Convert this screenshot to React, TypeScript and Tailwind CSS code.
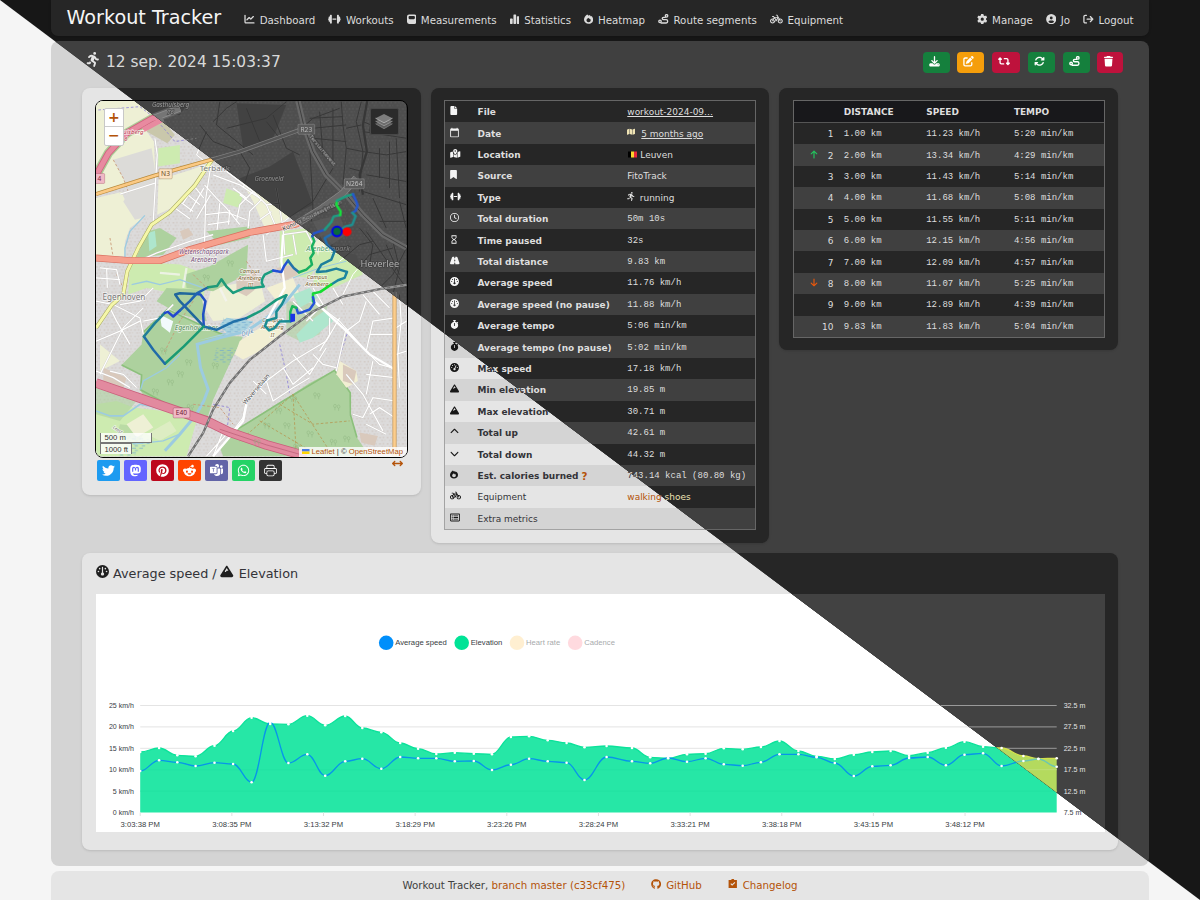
import React from "react";
import {
  FaArrowDown,
  FaArrowRightFromBracket,
  FaArrowUp,
  FaArrowsLeftRight,
  FaArrowsRotate,
  FaBicycle,
  FaBookmark,
  FaChartLine,
  FaChevronDown,
  FaChevronUp,
  FaCircleUser,
  FaDownload,
  FaDumbbell,
  FaFile,
  FaGauge,
  FaGaugeHigh,
  FaGear,
  FaGithub,
  FaMap,
  FaMapLocationDot,
  FaMastodon,
  FaMountain,
  FaPenToSquare,
  FaPersonRunning,
  FaPinterest,
  FaRedditAlien,
  FaRegClock,
  FaRegRectangleList,
  FaRetweet,
  FaRoad,
  FaStopwatch,
  FaTrash,
  FaTwitter,
  FaWhatsapp,
} from "react-icons/fa6";
import { MdCalendarToday, MdHourglassEmpty } from "react-icons/md";
import { BsMicrosoftTeams, BsPrinter } from "react-icons/bs";

type IconProps = { className?: string };
type IconType = React.ComponentType<IconProps>;
type ThemeProps = { dark: boolean };

/* ---------- custom icons ---------- */

const ScaleIcon = ({ className }: IconProps) => (
  <svg viewBox="0 0 16 16" className={className} fill="currentColor">
    <path
      fillRule="evenodd"
      d="M3.5 0h9A3.5 3.5 0 0 1 16 3.500v9a3.500 3.500 0 0 1-3.500 3.500h-9A3.500 3.500 0 0 1 0 12.500v-9A3.500 3.500 0 0 1 3.500 0zM4.500 2.800A1.800 1.800 0 0 0 2.700 4.600v1.600A1.800 1.800 0 0 0 4.500 8h7a1.800 1.800 0 0 0 1.800-1.800V4.600a1.800 1.800 0 0 0-1.800-1.800z"
    />
  </svg>
);

const BarsIcon = ({ className }: IconProps) => (
  <svg viewBox="0 0 16 16" className={className} fill="currentColor">
    <rect x="0" y="7" width="4.500" height="9" rx="1" />
    <rect x="5.800" y="0" width="4.500" height="16" rx="1" />
    <rect x="11.500" y="3" width="4.500" height="13" rx="1" />
  </svg>
);

const FlameIcon = ({ className }: IconProps) => (
  <svg viewBox="0 0 16 16" className={className} fill="currentColor">
    <path
      fillRule="evenodd"
      d="M5.500 0c1 .4 2 1.300 2.600 2.300L9.800.9c1 .8 1.700 1.700 2.200 2.600l1-.8C14.800 4.400 16 6.700 16 9c0 4-3.500 7-8 7s-8-3-8-7C0 5.500 2.500 2 5.500 0zM8 5.400C6.500 6.500 4.300 7.800 4.300 10c0 2 1.600 3.400 3.700 3.400s3.700-1.400 3.700-3.400c0-1.400-.8-2.600-1.600-3.300L9 7.800z"
    />
  </svg>
);

const RouteIcon = ({ className }: IconProps) => (
  <svg viewBox="0 0 16 16" className={className} fill="none" stroke="currentColor" strokeWidth="2.100">
    <circle cx="13" cy="2.900" r="1.900" />
    <circle cx="2.800" cy="11.500" r="1.900" />
    <path d="M11 5.200H8.200c-2.600 0-2.600 3.600 0 3.600h4.300c3 0 3 5.300 0 5.300H4.500" strokeLinecap="round" />
  </svg>
);

const CheckSquareIcon = ({ className }: IconProps) => (
  <svg viewBox="0 0 16 16" className={className} fill="currentColor">
    <path
      fillRule="evenodd"
      d="M5.500 1.500a2.600 2.600 0 0 1 5 0H15V16H1V1.500zM4 8.400l3 3 5.300-5.200-1.300-1.300-4 4-1.700-1.700z"
    />
  </svg>
);

const LayersIcon = ({ className }: IconProps) => (
  <svg viewBox="0 0 26 26" className={className}>
    <path d="M13 10 26 16.500 13 24 0 16.500z" fill="#5e5e5e" />
    <path d="M0 16.500 13 24l13-7.500" fill="none" stroke="#8a8a8a" />
    <path d="M13 6 26 12.500 13 19.500 0 12.500z" fill="#6d6d6d" />
    <path d="M0 12.500 13 19.500l13-7" fill="none" stroke="#a8a8a8" />
    <path d="M13 1.500 26 8 13 15 0 8z" fill="#7d7d7d" />
    <path d="M0 8l13 7 13-7" fill="none" stroke="#c4c4c4" />
  </svg>
);

/* ---------- header ---------- */

type NavEntry = { icon: IconType; label: string; size: string };

const mainNav: NavEntry[] = [
  { icon: FaChartLine, label: "Dashboard", size: "w-[11px] mr-[5px]" },
  { icon: FaDumbbell, label: "Workouts", size: "w-[12.800px] mr-[4.800px]" },
  { icon: ScaleIcon, label: "Measurements", size: "w-[9.500px] h-[9px] mr-[4.600px]" },
  { icon: BarsIcon, label: "Statistics", size: "w-[9.500px] h-[9.200px] mr-[5px]" },
  { icon: FlameIcon, label: "Heatmap", size: "w-[9.200px] h-[9.700px] mr-[4.700px]" },
  { icon: RouteIcon, label: "Route segments", size: "w-[10.700px] mr-[4.600px]" },
  { icon: FaBicycle, label: "Equipment", size: "w-[12.800px] mr-[4.800px]" },
];

const userNav: NavEntry[] = [
  { icon: FaGear, label: "Manage", size: "w-[10.500px] mr-[4.700px]" },
  { icon: FaCircleUser, label: "Jo", size: "w-[10.500px] mr-[4.700px]" },
  { icon: FaArrowRightFromBracket, label: "Logout", size: "w-[10.800px] mr-[4.700px]" },
];

function NavItem({ entry }: { entry: NavEntry }) {
  const Icon = entry.icon;
  return (
    <a className="flex items-baseline whitespace-nowrap">
      <Icon className={"shrink-0 h-[10.250px] " + entry.size} />
      <span>{entry.label}</span>
    </a>
  );
}

function Header({ dark }: ThemeProps) {
  return (
    <header
      className={
        "flex h-9 shrink-0 items-baseline rounded-b-[7px] pl-[15.500px] pr-[15.500px] pt-[4px] text-[10.250px] leading-[14px] shadow-sm " +
        (dark ? "bg-[#262626] text-[#dcdcdc]" : "bg-[#e5e5e5] text-[#404040]")
      }
    >
      <h1 className={"mr-[22.500px] whitespace-nowrap text-[19.200px] leading-[28px] " + (dark ? "text-[#f5f5f5]" : "text-[#262626]")}>
        Workout Tracker
      </h1>
      <nav className="flex gap-[13.100px]">
        {mainNav.map((entry) => (
          <NavItem key={entry.label} entry={entry} />
        ))}
      </nav>
      <nav className="ml-auto flex gap-[12.800px]">
        {userNav.map((entry) => (
          <NavItem key={entry.label} entry={entry} />
        ))}
      </nav>
    </header>
  );
}

/* ---------- title bar ---------- */

const actions: { icon: IconType; color: string }[] = [
  { icon: FaDownload, color: "w-[27px] bg-[#15803d]" },
  { icon: FaPenToSquare, color: "w-[27px] bg-[#f59e0b]" },
  { icon: FaRetweet, color: "w-[28.500px] bg-[#be123c]" },
  { icon: FaArrowsRotate, color: "w-[27px] bg-[#15803d]" },
  { icon: RouteIcon, color: "w-[27px] bg-[#15803d]" },
  { icon: FaTrash, color: "w-[26px] bg-[#be123c]" },
];

function TitleBar({ dark }: ThemeProps) {
  return (
    <div className="flex h-[47.500px] shrink-0 items-start pl-[35px] pr-[25.800px] pt-[11.500px]">
      <FaPersonRunning className={"mr-[5.500px] h-[15px] w-[14.500px] " + (dark ? "text-[#e5e5e5]" : "text-[#262626]")} />
      <h2 className={"text-[15.400px] leading-[20px] " + (dark ? "text-[#d9d9d9]" : "text-[#404040]")}>12 sep. 2024 15:03:37</h2>
      <div className="ml-auto flex gap-[7.600px]">
        {actions.map(({ icon: Icon, color }, i) => (
          <button key={i} className={"flex h-[20.700px] items-start rounded-[4px] pl-[6px] pt-[4.400px] text-white " + color}>
            <Icon className={"h-[10.500px] " + (i === 2 ? "w-[12px]" : "w-[11px]")} />
          </button>
        ))}
      </div>
    </div>
  );
}

/* ---------- map ---------- */

function Shield({ x, y, w, text, fill, ink }: { x: number; y: number; w: number; text: string; fill: string; ink: string }) {
  return (
    <g>
      <rect x={x - w / 2} y={y - 15} width={w} height={30} rx={3} fill={fill} stroke={ink} strokeOpacity={0.4} strokeWidth={2} />
      <text x={x} y={y + 7} textAnchor="middle" fontSize={20} fill={ink}>
        {text}
      </text>
    </g>
  );
}

function MapLabel({
  x,
  y,
  children,
  size = 19,
  fill = "#5f5f5f",
  italic = false,
  rotate = 0,
}: {
  x: number;
  y: number;
  children: string;
  size?: number;
  fill?: string;
  italic?: boolean;
  rotate?: number;
}) {
  return (
    <text
      x={x}
      y={y}
      textAnchor="middle"
      fontSize={size}
      fill={fill}
      fontStyle={italic ? "italic" : "normal"}
      stroke="#ffffff"
      strokeOpacity={0.7}
      strokeWidth={4}
      paintOrder="stroke"
      transform={rotate ? `rotate(${rotate} ${x} ${y})` : undefined}
    >
      {children}
    </text>
  );
}

const streets = [
  "M225 150 232 200 228 262 220 400",
  "M120 318 225 285",
  "M395 220 378 330 374 465",
  "M374 290 410 330 440 360 480 410",
  "M340 290 372 330M318 315 360 350M300 340 340 370M285 360 330 392",
  "M350 282 310 345M372 300 330 372M392 320 350 392",
  "M400 260 480 290 540 330",
  "M378 380 440 372 500 395M384 410 450 400M420 345 412 425M450 365 446 410",
  "M440 250 520 310 560 350 590 420",
  "M520 310 480 350 470 400M545 335 510 370 505 420M575 370 540 395",
  "M480 320 520 350M460 300 500 330",
  "M590 300 600 360 610 420 615 500",
  "M560 350 600 345M550 440 560 520 640 500",
  "M610 440 680 430 700 470M640 440 650 500",
  "M175 520 230 495 330 460 400 440",
  "M60 540 110 545 120 590M80 540 82 600M48 570 120 575",
  "M48 640 100 650 180 690 190 740",
  "M90 660 110 700 150 770M120 650 180 640 220 600",
  "M190 700 240 690 280 650M60 860 130 720 190 660",
  "M48 760 120 730 180 700",
  "M700 640 780 700 860 790 900 830 945 842",
  "M780 690 740 760 640 820 560 880 500 940 490 990 460 1030",
  "M640 800 690 860 740 780M610 840 640 890 700 840",
  "M560 880 580 940 640 900 690 870M700 800 730 830 770 840",
  "M750 690 750 740 720 790M520 880 560 920",
  "M800 720 770 850M860 640 840 700 800 730",
  "M860 790 880 700 945 690M870 740 945 740M880 820 860 920M860 860 945 870",
  "M800 860 850 920 910 1030M820 980 850 990 880 930 945 940",
  "M870 980 900 960 945 990M860 1010 920 1040",
  "M960 620 965 700 955 800 960 900M981 700 950 720M981 790 950 800",
  "M380 1106 440 1040 470 1020M400 1106 430 1030",
  "M48 850 100 870 150 900M90 850 130 860 170 900",
  "M700 600 730 650 680 700M640 640 700 700M760 600 790 650",
  "M850 620 900 680M880 610 930 660",
];

const boulevardStreets = [
  "M360 110 400 160 480 190M400 100 440 60 470 40M380 130 350 200 400 240",
  "M420 40 410 110 520 200M440 120 560 90 620 40M500 60 540 160",
  "M480 190 510 240 490 300M560 100 600 150",
  "M580 80 620 180 660 200M660 125 700 90 780 60M700 120 800 110M700 150 800 160",
  "M785 40 790 110 800 180 790 290M690 90 790 85M720 70 730 200M760 60 760 230",
  "M845 40 830 100 850 190 840 310M800 120 845 110M800 180 850 190 M810 240 848 250",
  "M690 170 700 360 695 400M560 440 640 380 700 340 760 240",
  "M850 130 981 150M850 190 920 200 981 190M880 60 870 130M930 160 930 300M860 260 981 280",
  "M850 100 900 120M900 180 900 270M950 150 960 330M850 310 981 350",
  "M940 480 870 500 820 560 790 620M860 430 980 600M900 400 981 400M880 460 840 470 780 520",
  "M920 470 960 560M940 460 960 540 940 620M981 480 940 560 900 600",
  "M960 340 980 420M880 330 920 420M840 420 880 470 870 530",
];

const trees = [
  [250, 785], [325, 820], [300, 855], [225, 908], [330, 955], [405, 830], [270, 880], [620, 1010], [560, 1010], [690, 1035],
  [710, 920], [770, 955], [595, 965], [640, 930], [760, 1060], [650, 1075], [530, 1060], [800, 1050], [378, 565], [450, 522],
];

function MapTiles({ id }: { id: string }) {
  return (
    <g>
      <defs>
        <pattern id={`houses-${id}`} width="23" height="19" patternUnits="userSpaceOnUse">
          <rect width="23" height="19" fill="#dcdbdb" />
          <rect x="2" y="3" width="5" height="4" fill="#d0c8c3" />
          <rect x="13" y="2" width="4" height="5" fill="#d3cbc6" />
          <rect x="8" y="12" width="6" height="3" fill="#d1c9c4" />
          <rect x="18" y="11" width="3" height="4" fill="#d5cec9" />
        </pattern>
        <pattern id={`marsh-${id}`} width="22" height="14" patternUnits="userSpaceOnUse">
          <path d="M2 4h12M10 11h10" stroke="#6fa9cf" strokeWidth="2" />
        </pattern>
      </defs>
      <rect x="48" y="38" width="933" height="1070" fill={`url(#houses-${id})`} />

      {/* farmland */}
      <g fill="#eef0d5">
        <path d="M48 38H330L300 80 240 78 215 85 200 130 222 160 226 262 48 320z" />
        <path d="M48 330 125 312 150 370 195 385 150 420 135 460 133 505H48z" />
        <path d="M236 275 330 246 385 226 330 300 270 362 232 380z" />
        <path d="M480 270 570 235 640 190 700 350 640 380 560 430 520 340z" />
        <path d="M395 600 540 575 556 640 480 690 400 700 378 665z" />
        <path d="M470 45 620 50 580 150 490 180z" />
        <path d="M700 470 730 440 760 470 740 520 700 520z" />
        <path d="M60 770 120 820 60 850z" />
      </g>
      <path d="M100 215 150 310 130 340 165 395 225 380 228 262 215 180 150 200z" fill="#dcdbd8" />
      <path d="M200 130 240 82 285 140 262 165z" fill="#c9c7ab" />

      {/* grass and parks */}
      <g fill="#cdebb0">
        <path d="M48 950 110 940 160 960 250 970 350 1000 320 1106H48z" />
        <path d="M150 520 300 530 380 560 370 640 300 620 200 600 145 620z" />
        <path d="M235 180 300 170 300 225 235 235z" />
        <path d="M600 430 690 420 720 520 690 570 600 560z" />
        <path d="M720 480 830 500 850 560 760 600 700 590z" />
        <path d="M185 870 260 860 290 870 230 930 190 910z" />
        <path d="M440 300 490 320 480 360 430 345z" />
        <path d="M360 930 395 925 390 970 350 990z" />
      </g>
      <g fill="#add19e">
        <path d="M190 730 235 690 262 668 370 716 440 745 490 746 455 816 400 936 380 1000 300 970 200 936 180 906 185 860 125 832 185 770z" />
        <path d="M465 1030 600 946 690 886 765 848 812 915 810 980 832 1050 870 1106H430L420 1080z" />
        <path d="M315 560 390 535 450 500 505 470 500 560 440 590 400 610 320 600z" />
        <path d="M168 510 205 430 240 420 290 450 250 500z" />
        <path d="M620 640 745 650 720 740 660 760 620 740z" opacity="0.600" />
        <path d="M380 430 510 415 510 450 420 470z" />
        <path d="M260 600 360 605 380 700 300 680 230 640z" />
        <path d="M700 400 780 380 800 440 740 480z" opacity="0.700" />
        <path d="M48 900 170 940 120 1000 48 980z" opacity="0.600" />
        <path d="M120 1010 200 1020 180 1060 110 1050z" opacity="0.600" />
      </g>
      <path d="M188 735 262 665 372 716 440 745M125 832 185 862 182 906 300 970M465 1030 600 946 765 848 812 915 812 980 832 1050" fill="none" stroke="#8cc07c" strokeWidth="5" />
      <g fill="#eef0d5">
        <path d="M410 610 530 585 550 635 475 680 405 690 390 660z" />
        <path d="M140 1010 190 980 220 1020 170 1050z" />
        <path d="M200 1040 270 1000 290 1030 240 1060z" opacity="0.500" />
      </g>
      <g fill="#f2efd3">
        <path d="M480 760 540 720 580 700 610 730 540 790 490 815 465 800z" />
        <path d="M780 820 830 850 835 880 800 900 770 860z" />
        <path d="M560 600 640 570 660 620 600 650z" />
      </g>
      <g fill="#aee6cd">
        <path d="M640 620 690 600 715 630 660 660z" />
        <path d="M650 740 690 700 740 665 760 700 700 750 660 765z" />
        <path d="M205 435 225 428 230 475 208 490z" />
      </g>
      <g fill="#d9c9bc">
        <path d="M470 570 520 555 545 590 500 625 470 610z" />
        <path d="M590 540 640 530 655 560 610 580z" />
        <path d="M790 830 830 850 822 890 790 880z" />
        <path d="M300 430 325 420 340 440 310 455z" />
        <path d="M70 840 140 870 130 900 70 880z" />
        <path d="M840 1035 895 1045 885 1075 845 1065z" />
      </g>
      <g fill="none" stroke="#f4f4f0" strokeWidth="7" opacity="0.800">
        <path d="M320 540 310 600M240 555 300 560M420 600 440 640" />
      </g>

      {/* water */}
      <path d="M350 760 420 745 500 725 520 700 440 690 420 710 440 735z" fill="#aad3df" />
      <path d="M410 780 470 780 450 830 400 820zM150 1040 220 1060 160 1106H110z" fill={`url(#marsh-${id})`} />
      <path d="M430 690 520 700 500 740 420 740z" fill={`url(#marsh-${id})`} />
      <g fill="none" stroke="#9ccbe0">
        <path d="M255 1090 300 1040 350 980 372 940 385 905 362 840 352 770 420 750 500 730 560 690 620 640 660 590" strokeWidth="9" />
        <path d="M195 382 150 430 135 480 135 510" strokeWidth="4" />
        <path d="M155 590 200 580 240 590 300 575 370 600" strokeWidth="4" />
        <path d="M48 970 90 985 130 985 180 950 260 965 340 985" strokeWidth="5" />
        <path d="M182 906 190 880 260 840 300 800" strokeWidth="4" />
        <path d="M160 1070 250 1060 300 1040" strokeWidth="4" />
        <path d="M640 570 720 540 800 520" strokeWidth="3" />
      </g>
      <path d="M240 680 280 700 270 735 245 715zM590 700 610 690 620 710z" fill="#f2fafc" />

      {/* paths */}
      <g fill="none" strokeWidth="2.500" strokeDasharray="8 6">
        <path d="M480 1060 640 920 760 1106M540 1000 720 1106M600 950 700 1010 810 1000M640 920 650 1106" stroke="#b59a55" />
        <path d="M55 65 180 55 225 90 260 130 285 160 350 150M600 770 620 860 630 920M770 840 805 730M440 1040 450 960 400 950" stroke="#8d83d8" />
        <path d="M100 215 130 270 145 310M90 450 100 510M340 950 420 960 460 1010M110 560 130 600" stroke="#c79673" />
        <path d="M340 640 300 700 250 800M340 560 380 600M500 520 540 580" stroke="#c79673" />
      </g>

      {/* streets */}
      <g fill="none" stroke="#cac7c4" strokeWidth="5.500">
        {streets.map((d) => (
          <path key={d} d={d} />
        ))}
      </g>
      <g fill="none" stroke="#ffffff" strokeWidth="3.800">
        {streets.map((d) => (
          <path key={d} d={d} />
        ))}
      </g>
      <g fill="none" stroke="#ffffff" strokeWidth="3">
        {boulevardStreets.map((d) => (
          <path key={d} d={d} />
        ))}
      </g>
      <path d="M610 440 605 520 615 600 560 700M700 636 790 720 870 800 945 845M500 950 490 1000 440 1060 400 1106M863 38 850 110 862 190 840 260 850 320" fill="none" stroke="#ffffff" strokeWidth="7" />

      {/* arterial roads */}
      <g fill="none" strokeLinejoin="round">
        <path d="M400 210 345 292 270 372 215 410 175 480 142 550 130 620 95 652 48 720" stroke="#a5a85a" strokeWidth="12" />
        <path d="M400 210 345 292 270 372 215 410 175 480 142 550 130 620 95 652 48 720" stroke="#f5f7a9" strokeWidth="9" />
        <path d="M48 318 225 262 400 213 480 190 660 125" stroke="#b88a3c" strokeWidth="12" />
        <path d="M48 318 225 262 400 213 480 190 660 125" stroke="#fbc983" strokeWidth="8" />
        <path d="M945 612V1106" stroke="#c5924a" strokeWidth="12" />
        <path d="M945 612V1106" stroke="#fbcd8d" strokeWidth="8" />
        <path d="M655 38 672 110 700 190 740 260 800 320 850 380 910 440 981 480" stroke="#b4b4b4" strokeWidth="16" />
        <path d="M655 38 672 110 700 190 740 260 800 320 850 380 910 440 981 480" stroke="#f4f4f4" strokeWidth="3" />
        <path d="M48 510 150 518 240 518 330 485 510 433 650 408 720 365 790 315 830 270" stroke="#d96f5f" strokeWidth="21" />
        <path d="M48 510 150 518 240 518 330 485 510 433 650 408 720 365 790 315 830 270" stroke="#f6a08d" strokeWidth="17" />
        <path d="M48 262 85 195 140 135 215 92 300 60" stroke="#7fb06e" strokeWidth="28" opacity="0.600" />
        <path d="M48 262 85 195 140 135 215 92 300 60" stroke="#d0607d" strokeWidth="20" />
        <path d="M48 262 85 195 140 135 215 92 300 60M190 125 250 92" stroke="#e88aa0" strokeWidth="15" />
        <path d="M48 886 170 928 380 1000 450 1034 560 1072 680 1106" stroke="#c9607b" strokeWidth="29" />
        <path d="M48 886 170 928 380 1000 450 1034 560 1072 680 1106" stroke="#e28a9f" strokeWidth="24" />
        <path d="M420 1025 560 1072 680 1106" stroke="#b85a72" strokeWidth="2" />
      </g>

      {/* railway */}
      <g fill="none">
        <path d="M325 1106 370 1036 400 966 450 886 510 816 600 746 700 671 790 626 900 604 981 591" stroke="#707070" strokeWidth="7" />
        <path d="M325 1106 370 1036 400 966 450 886 510 816 600 746 700 671 790 626 900 604 981 591" stroke="#d8d8d8" strokeWidth="2" strokeDasharray="10 10" />
      </g>

      <g stroke="#8fb782" strokeWidth="1.500" fill="none">
        {trees.map(([x, y]) => (
          <path key={`${x}-${y}`} d={`M${x - 8} ${y}a4 5 0 1 1 8 0a4 5 0 1 1-8 0M${x - 4} ${y + 5}v8M${x + 3} ${y + 2}a4 5 0 1 1 8 0a4 5 0 1 1-8 0M${x + 7} ${y + 7}v8`} />
        ))}
      </g>

      {/* labels */}
      <Shield x={257} y={257} w={40} text="N3" fill="#fbe3c4" ink="#6b4a1a" />
      <Shield x={58} y={271} w={32} text="4" fill="#f0b8c6" ink="#8b1e3f" />
      <Shield x={305} y={976} w={50} text="E40" fill="#f0b8c6" ink="#6e1a35" />
      <Shield x={680} y={123} w={50} text="R23" fill="#c8c8c8" ink="#333333" />
      <Shield x={824} y={287} w={60} text="N264" fill="#c8c8c8" ink="#222222" />
      <MapLabel x={405} y={249} size={24} fill="#777777">Terbank</MapLabel>
      <MapLabel x={132} y={637} size={24.500} fill="#777777">Egenhoven</MapLabel>
      <MapLabel x={901} y={538} size={28} fill="#444444">Heverlee</MapLabel>
      <MapLabel x={272} y={56} size={19} italic>Gasthuisberg</MapLabel>
      <MapLabel x={272} y={78} size={18} italic>76</MapLabel>
      <MapLabel x={160} y={136} size={18.500} italic fill="#c03a4f">uisberg</MapLabel>
      <MapLabel x={138} y={158} size={18} italic fill="#c03a4f">6</MapLabel>
      <MapLabel x={372} y={498} size={19} italic fill="#76507a">Wetenschapspark</MapLabel>
      <MapLabel x={372} y={521} size={19} italic fill="#76507a">Arenberg</MapLabel>
      <MapLabel x={568} y={278} size={19.500} italic fill="#777777">Groenveld</MapLabel>
      <MapLabel x={350} y={728} size={20.500} italic fill="#4f8a55">Egenhovenbos</MapLabel>
      <MapLabel x={745} y={490} size={21.500} italic fill="#4f9a6a">Arenbergpark</MapLabel>
      <MapLabel x={510} y={556} size={17} italic fill="#7a5f2c">Campus</MapLabel>
      <MapLabel x={510} y={577} size={17} italic fill="#7a5f2c">Arenberg</MapLabel>
      <MapLabel x={512} y={598} size={17} italic fill="#7a5f2c">III</MapLabel>
      <MapLabel x={712} y={572} size={17} italic fill="#7a5f2c">Campus</MapLabel>
      <MapLabel x={712} y={593} size={17} italic fill="#7a5f2c">Arenberg</MapLabel>
      <MapLabel x={578} y={703} size={17} italic fill="#7a5f2c">Campus</MapLabel>
      <MapLabel x={578} y={725} size={17} italic fill="#7a5f2c">Arenberg</MapLabel>
      <MapLabel x={578} y={747} size={17} italic fill="#7a5f2c">II</MapLabel>
      <MapLabel x={505} y={740} size={19} italic fill="#5a86ad" rotate={-20}>Dijle</MapLabel>
      <MapLabel x={534} y={908} size={18} fill="#444444" rotate={-50}>Waversebaan</MapLabel>
      <MapLabel x={724} y={190} size={17.500} fill="#333333" rotate={50}>Tervuursevest</MapLabel>
      <MapLabel x={700} y={388} size={18.500} fill="#333333" rotate={-25}>Koning Boudewijnlaan</MapLabel>
      <MapLabel x={110} y={1030} size={14} italic fill="#777777" rotate={35}>Leest</MapLabel>
    </g>
  );
}

const track: [string, string][] = [
  ["M770 430 735 450 742 470 765 490", "#1f6fb5"],
  ["M765 490 755 515 725 530 712 552 740 550 770 542 802 552", "#1d7f9c"],
  ["M802 552 795 570 775 577 755 590", "#1b86a0"],
  ["M755 590 740 600 722 612", "#12e02a"],
  ["M722 612 700 617 700 641", "#18d83a"],
  ["M700 628 704 645 690 665 668 673 655 676 650 660", "#2553d8"],
  ["M650 660 638 655 632 672 632 700", "#19b858"],
  ["M632 700 600 701 583 722 568 728 556 715 562 698 590 690 590 672 606 650 620 622", "#1b8c93"],
  ["M620 622 590 636 545 668 500 691", "#1a9a7c"],
  ["M500 691 460 702 410 726 372 716", "#2170a8"],
  ["M372 716 370 680 377 640 362 620 345 618", "#2050c4"],
  ["M345 618 300 616 286 620 300 640 372 716", "#20689c"],
  ["M372 716 312 776 255 828", "#199a74"],
  ["M255 828 220 786 192 746", "#226ca8"],
  ["M192 746 225 706 255 675", "#1f7d98"],
  ["M255 675 264 672 280 686 300 668", "#2348cf"],
  ["M300 668 330 640 352 616 385 598", "#2163b0"],
  ["M385 598 412 594 425 574 440 596 460 615", "#1f9a78"],
  ["M460 615 495 600 520 600 552 596 546 585 548 572 555 560 580 548", "#1b9d80"],
  ["M580 548 605 552 613 535 625 518", "#2450d6"],
  ["M625 518 642 540 658 553", "#2274a8"],
  ["M658 553 680 545 697 530 692 510 702 495 697 475 704 460 698 445", "#19b061"],
  ["M698 445 702 436 735 425", "#2455cc"],
  ["M735 425 755 402 762 385 782 381", "#1f9d84"],
  ["M782 381 783 370 770 350 772 338", "#16e23c"],
  ["M772 338 800 324 820 318", "#1e9f82"],
  ["M820 318 830 340 834 352 828 368 818 374", "#2658cf"],
  ["M818 374 828 384 818 410 798 415 786 424", "#1f8f90"],
];

function WorkoutMap({ dark }: ThemeProps) {
  const control = dark ? "bg-[#333333] text-[#e0e0e0] border-[#666666]" : "bg-white text-[#b45309] border-[#c8c8c8]";
  return (
    <div className="relative h-[357.500px] overflow-hidden rounded-[8px] border-[1.500px] border-black">
      <svg viewBox="48 38 933 1069" preserveAspectRatio="none" className="block h-full w-full font-['Noto_Sans',sans-serif]">
        <g className={dark ? "[filter:grayscale(1)_invert(0.8)_brightness(1.08)]" : ""}>
          <MapTiles id={dark ? "night" : "day"} />
        </g>
        <g fill="none" strokeWidth="7.500" strokeLinecap="round" strokeLinejoin="round">
          {track.map(([d, color]) => (
            <path key={d} d={d} stroke={color} />
          ))}
        </g>
        <path d="M632 678h14v22l-14 4z" fill="#1c35e6" />
        <circle cx="802" cy="431" r="13.500" fill="#ff0000" />
        <circle cx="772" cy="430" r="14.500" fill="#0a6b3c" stroke="#0000ee" strokeWidth="6" />
      </svg>
      <div className={"absolute left-[7.500px] top-[7px] flex w-[20.500px] flex-col rounded-[2px] border text-center text-[14px] font-bold leading-[17.500px] " + control}>
        <span className={"h-[18px] border-b " + (dark ? "border-[#666666]" : "border-[#cccccc]")}>+</span>
        <span className="h-[17.500px]">−</span>
      </div>
      <div className={"absolute right-[8px] top-[7px] flex h-[27px] w-[29px] items-center justify-center rounded-[2px] border " + (dark ? "border-[#484848] bg-[#2b2b2b]" : "border-[#c8c8c8] bg-white")}>
        <LayersIcon className="h-[17px] w-[18px]" />
      </div>
      <div className="absolute bottom-[3px] left-[4px] flex flex-col items-start font-['Liberation_Sans',sans-serif] text-[7.700px] leading-[9px] text-[#333333]">
        <span className="h-[10.500px] w-[52px] border border-t-0 border-[#777777] bg-white/80 pl-[3.500px]">500 m</span>
        <span className="h-[10.500px] w-[32px] border border-b-0 border-[#777777] bg-white/80 pl-[3.500px] pt-px">1000 ft</span>
      </div>
      <div className="absolute bottom-0 right-0 flex h-[10px] items-center bg-white/80 pl-[3.500px] pr-[3.500px] font-['Liberation_Sans',sans-serif] text-[7.700px] leading-[9px] text-[#333333]">
        <svg viewBox="0 0 12 8" className="mr-[2px] h-[5px] w-[7.500px]">
          <path fill="#4C7BE1" d="M0 0h12v4H0z" />
          <path fill="#FFD500" d="M0 4h12v4H0z" />
        </svg>
        <span className="whitespace-pre">
          <a className="text-[#b45309]">Leaflet</a> | © <a className="text-[#b45309]">OpenStreetMap</a>
        </span>
      </div>
    </div>
  );
}

const shares: { icon: IconType; color: string }[] = [
  { icon: FaTwitter, color: "bg-[#1d9bf0]" },
  { icon: FaMastodon, color: "bg-[#6364ff]" },
  { icon: FaPinterest, color: "bg-[#bd081c]" },
  { icon: FaRedditAlien, color: "bg-[#ff4500]" },
  { icon: BsMicrosoftTeams, color: "bg-[#6264a7]" },
  { icon: FaWhatsapp, color: "bg-[#25d366]" },
  { icon: BsPrinter, color: "bg-[#333333]" },
];

const cardBase = "rounded-[8px] shadow-sm ";
const cardTone = (dark: boolean) => (dark ? "bg-[#262626]" : "bg-[#e5e5e5]");

function MapCard({ dark }: ThemeProps) {
  return (
    <section className={cardBase + "h-[407px] w-[339px] pl-[13px] pr-[13.500px] pt-[12px] " + cardTone(dark)}>
      <WorkoutMap dark={dark} />
      <div className="flex items-start gap-[4px] pl-[2px] pr-[4.500px] pt-[2px]">
        {shares.map(({ icon: Icon, color }, i) => (
          <a key={i} className={"flex h-[21px] w-[23px] items-center justify-center rounded-[2px] text-white " + color}>
            <Icon className="h-[13px] w-[13px]" />
          </a>
        ))}
        <FaArrowsLeftRight className={"ml-auto mt-[-2px] h-[11px] w-[11px] " + linkTone(dark)} />
      </div>
    </section>
  );
}

/* ---------- details ---------- */

const mono = "font-['Liberation_Mono',monospace] text-[9px]";
const linkTone = (dark: boolean) => (dark ? "text-[#efe3b4]" : "text-[#b45309]");

type Detail = { icon: IconType; size: string; label: string; value?: React.ReactNode; light?: boolean };

function detailRows(dark: boolean): Detail[] {
  const num = (s: string) => <span className={mono}>{s}</span>;
  return [
    { icon: FaFile, size: "w-[7.500px]", label: "File", value: <a className="underline underline-offset-1">workout-2024-09…</a> },
    {
      icon: MdCalendarToday,
      size: "w-[9px] scale-115",
      label: "Date",
      value: (
        <>
          <FaMap className={"mr-[6px] mt-[-3px] h-[7.500px] w-[8px] " + linkTone(dark)} />
          <a className="underline underline-offset-1">5 months ago</a>
        </>
      ),
    },
    {
      icon: FaMapLocationDot,
      size: "w-[10.500px]",
      label: "Location",
      value: (
        <>
          <svg viewBox="0 0 9 7" className="ml-[0.500px] mr-[3.500px] h-[7px] w-[9px]">
            <path d="M0 .5h3v6H0z" fill="#000000" />
            <path d="M3 .5h3v6H3z" fill="#fbd72d" />
            <path d="M6 .5h3v6H6z" fill="#e8283a" />
          </svg>
          Leuven
        </>
      ),
    },
    { icon: FaBookmark, size: "w-[7px]", label: "Source", value: "FitoTrack" },
    {
      icon: FaDumbbell,
      size: "w-[11px]",
      label: "Type",
      value: (
        <>
          <FaPersonRunning className="mr-[4.500px] mt-[-3px] h-[9px] w-[8px]" />
          running
        </>
      ),
    },
    { icon: FaRegClock, size: "w-[9px]", label: "Total duration", value: num("50m 10s") },
    { icon: MdHourglassEmpty, size: "w-[8px] scale-125", label: "Time paused", value: num("32s") },
    { icon: FaRoad, size: "w-[9.500px]", label: "Total distance", value: num("9.83 km") },
    { icon: FaGauge, size: "w-[9px]", label: "Average speed", value: num("11.76 km/h") },
    { icon: FaGauge, size: "w-[9px]", label: "Average speed (no pause)", value: num("11.88 km/h") },
    { icon: FaStopwatch, size: "w-[9px]", label: "Average tempo", value: num("5:06 min/km") },
    { icon: FaStopwatch, size: "w-[9px]", label: "Average tempo (no pause)", value: num("5:02 min/km") },
    { icon: FaGaugeHigh, size: "w-[9px]", label: "Max speed", value: num("17.18 km/h") },
    { icon: FaMountain, size: "w-[9px]", label: "Min elevation", value: num("19.85 m") },
    { icon: FaMountain, size: "w-[9px]", label: "Max elevation", value: num("30.71 m") },
    { icon: FaChevronUp, size: "w-[9px]", label: "Total up", value: num("42.61 m") },
    { icon: FaChevronDown, size: "w-[9px]", label: "Total down", value: num("44.32 m") },
    { icon: FlameIcon, size: "w-[8px]", label: "Est. calories burned", value: num("743.14 kcal (80.80 kg)") },
    { icon: FaBicycle, size: "w-[11px]", label: "Equipment", value: <a className={linkTone(dark)}>walking shoes</a>, light: true },
    { icon: FaRegRectangleList, size: "w-[10px]", label: "Extra metrics", light: true },
  ];
}

function stripe(dark: boolean, i: number) {
  if (dark) return i % 2 ? "bg-[#404040]" : "bg-[#262626]";
  return i % 2 ? "bg-[#d4d4d4]" : "bg-[#e5e5e5]";
}

function DetailsCard({ dark }: ThemeProps) {
  return (
    <section className={cardBase + "h-[455px] w-[338px] px-[13px] pt-[12px] " + cardTone(dark)}>
      <div className={"border text-[8.970px] " + (dark ? "border-[#666666] text-[#dedede]" : "border-[#a3a3a3] text-[#333338]")}>
        {detailRows(dark).map((row, i) => {
          const Icon = row.icon;
          return (
            <div key={row.label} className={"flex h-[21.420px] items-center pt-[0.900px] leading-[12px] " + stripe(dark, i)}>
              <span className="w-[32.500px] shrink-0 pl-[5px]">
                <Icon className={"mt-[-3px] h-[9px] " + row.size + (dark ? " text-[#f5f5f5]" : " text-[#171717]")} />
              </span>
              <span className={"flex w-[149.800px] shrink-0 whitespace-nowrap " + (row.light ? "" : "font-bold")}>
                {row.label}
                {row.label.startsWith("Est.") && <b className={"ml-[3px] text-[10.250px] " + linkTone(dark)}>?</b>}
              </span>
              <span className="flex items-center whitespace-nowrap">{row.value}</span>
            </div>
          );
        })}
      </div>
    </section>
  );
}

/* ---------- splits ---------- */

const splits: [string, string, string][] = [
  ["1.00", "11.23", "5:20"],
  ["2.00", "13.34", "4:29"],
  ["3.00", "11.43", "5:14"],
  ["4.00", "11.68", "5:08"],
  ["5.00", "11.55", "5:11"],
  ["6.00", "12.15", "4:56"],
  ["7.00", "12.09", "4:57"],
  ["8.00", "11.07", "5:25"],
  ["9.00", "12.89", "4:39"],
  ["9.83", "11.83", "5:04"],
];

function SplitsCard({ dark }: ThemeProps) {
  const cols = "grid grid-cols-[40px_10.300px_82.400px_87.700px_1fr] items-center pt-[0.800px] ";
  return (
    <section className={cardBase + "h-[262px] w-[339px] px-[13px] pt-[12px] " + cardTone(dark)}>
      <div className={"ml-[0.500px] border text-[8.970px] leading-[12px] " + (dark ? "border-[#666666] text-[#dedede]" : "border-[#a3a3a3] text-[#333338]")}>
        <div className={cols + "h-[22px] border-b font-bold " + (dark ? "border-[#555555] bg-[#18181b]" : "border-[#a3a3a3] bg-[#fafafa]")}>
          <span />
          <span />
          <span>DISTANCE</span>
          <span>SPEED</span>
          <span>TEMPO</span>
        </div>
        {splits.map(([distance, speed, tempo], i) => (
          <div key={i} className={cols + "h-[21.420px] " + stripe(dark, i)}>
            <span className="flex items-center justify-end">
              {i === 1 && <FaArrowUp className="mr-[9.500px] mt-[-3px] h-[9px] w-[8px] text-[#22c55e]" />}
              {i === 7 && <FaArrowDown className="mr-[9.500px] mt-[-3px] h-[9px] w-[8px] text-[#ea580c]" />}
              {i + 1}
            </span>
            <span />
            <span className={mono}>{distance} km</span>
            <span className={mono}>{speed} km/h</span>
            <span className={mono}>{tempo} min/km</span>
          </div>
        ))}
      </div>
    </section>
  );
}

/* ---------- chart ---------- */

const xs = [
  140, 158.9, 177.1, 195.4, 214.3, 232.9, 251.4, 270, 288.2, 307.1, 325, 345, 362.1, 381.1, 400, 417.9, 436.1, 454.6, 473.6, 491.8,
  510.7, 528.9, 547.5, 566.4, 584.3, 606.4, 631.8, 650, 667.9, 686.8, 705.4, 723.6, 742.5, 760.7, 779.3, 798.2, 816.4, 834.6, 853.6,
  872.1, 890.4, 908.9, 927.5, 945.7, 964.3, 982.9, 1001.4, 1023.2, 1038.2, 1056.5,
];
const elevation = [
  752, 748, 755.3, 756.3, 745.7, 731, 717.7, 724, 724.3, 715.7, 725.3, 716, 728, 732.3, 743, 748.7, 754, 752.7, 753.7, 754.3, 737,
  736.3, 740.3, 743, 747.3, 746, 748, 757.3, 758.3, 754.3, 753.7, 748.3, 749.3, 747, 741, 751, 756.3, 759, 754.7, 752, 751, 755.7,
  752.7, 747.7, 741.7, 746.7, 748, 756, 758.7, 758.3,
];
const speeds = [
  771, 760.3, 762.3, 766, 762.7, 764, 782.3, 722.3, 763, 754.3, 775.7, 761.3, 758.7, 768.7, 757, 758.3, 758.3, 761.3, 761, 770, 764.7,
  758.7, 761.3, 762.7, 780, 757, 761.3, 763.3, 758, 761.7, 758.3, 764.3, 765.7, 762.3, 754.3, 754.3, 757.3, 763, 776, 766.3, 765.3, 758,
  757, 765.3, 754.7, 753.3, 766, 761, 759, 766.7,
];

function smooth(ys: number[]) {
  let d = `M${xs[0]} ${ys[0]}`;
  for (let i = 1; i < xs.length; i++) {
    const c = (xs[i] - xs[i - 1]) * 0.4;
    d += `C${xs[i - 1] + c} ${ys[i - 1]} ${xs[i] - c} ${ys[i]} ${xs[i]} ${ys[i]}`;
  }
  return d;
}

const ticks = ["3:03:38 PM", "3:08:35 PM", "3:13:32 PM", "3:18:29 PM", "3:23:26 PM", "3:28:24 PM", "3:33:21 PM", "3:38:18 PM", "3:43:15 PM", "3:48:12 PM"];

const legend = [
  { x: 386, label: "Average speed", color: "#008ffb", on: true },
  { x: 461.5, label: "Elevation", color: "#00e396", on: true },
  { x: 516.8, label: "Heart rate", color: "#feb019", on: false },
  { x: 575, label: "Cadence", color: "#ff4560", on: false },
];

function Chart({ dark }: ThemeProps) {
  const ink = dark ? "#e5e5e5" : "#373d3f";
  const areaColor = dark ? "#b4da5e" : "#26e7a6";
  return (
    <svg viewBox="95.800 594 1009 238" className={"block h-[238px] w-full font-['Liberation_Sans',sans-serif] " + (dark ? "bg-[#424242]" : "bg-white")}>
      {[0, 1, 2, 3, 4].map((i) => (
        <line key={i} x1="140" x2="1056.500" y1={705.5 + i * 21.4} y2={705.5 + i * 21.4} stroke={dark ? "#9a9a9a" : "#e4e4e4"} strokeWidth="1" />
      ))}
      <path d={`${smooth(elevation)}V812.500H140Z`} fill={areaColor} />
      {[3, 4].map((i) => (
        <line key={i} x1="140" x2="1056.500" y1={705.5 + i * 21.4} y2={705.5 + i * 21.4} stroke={dark ? "#c6e286" : "#22df9f"} strokeWidth="0.600" />
      ))}
      <path d={smooth(elevation)} fill="none" stroke={dark ? "#d3e14c" : "#0be29a"} strokeWidth="1.300" />
      <path d={smooth(speeds)} fill="none" stroke={dark ? "#6cc7b0" : "#0795ea"} strokeWidth="1.300" />
      {xs.map((x, i) => (
        <g key={x} fill="#ffffff">
          <circle cx={x} cy={elevation[i]} r="1.300" />
          <circle cx={x} cy={speeds[i]} r="1.300" />
        </g>
      ))}
      <g fontSize="7.050" fill={ink}>
        {[25, 20, 15, 10, 5, 0].map((v, i) => (
          <text key={v} x="133.800" y={708 + i * 21.4} textAnchor="end">
            {v} km/h
          </text>
        ))}
        {["32.5", "27.5", "22.5", "17.5", "12.5", "7.5"].map((v, i) => (
          <text key={v} x="1063.500" y={708 + i * 21.4}>
            {v} m
          </text>
        ))}
      </g>
      <g fontSize="7.690" fill={ink}>
        {ticks.map((t, i) => (
          <g key={t}>
            <line x1={140 + i * 91.65} x2={140 + i * 91.65} y1="812.500" y2="816" stroke="#e0e0e0" />
            <text x={140 + i * 91.65} y="827" textAnchor="middle">
              {t}
            </text>
          </g>
        ))}
        {legend.map((l) => (
          <g key={l.label}>
            <circle cx={l.x} cy="642.800" r="7.300" fill={l.color} opacity={l.on ? 1 : 0.2} />
            <text x={l.x + 9} y="645.300" opacity={l.on ? 1 : 0.45}>
              {l.label}
            </text>
          </g>
        ))}
      </g>
    </svg>
  );
}

function ChartCard({ dark }: ThemeProps) {
  return (
    <section className={"h-[297.500px] rounded-[8px] px-[13.500px] pt-[11px] shadow-sm " + cardTone(dark)}>
      <h3 className={"flex h-[30px] items-start text-[12.800px] leading-[20px] " + (dark ? "text-[#dedede]" : "text-[#333338]")}>
        <FaGauge className="mr-[4.500px] mt-[1.500px] h-[13px] w-[13px] text-[#1f1f1f]" />
        <span className="mr-[3.500px]">Average speed /</span>
        <FaMountain className="mr-[5px] mt-[1.500px] h-[13px] w-[13.500px] text-[#1f1f1f]" />
        <span>Elevation</span>
      </h3>
      <Chart dark={dark} />
    </section>
  );
}

/* ---------- page ---------- */

function Footer({ dark }: ThemeProps) {
  return (
    <footer
      className={
        "mt-[5px] flex h-[50px] shrink-0 items-start justify-center rounded-t-[8px] pt-[6.500px] text-[10.250px] leading-[14px] " +
        (dark ? "bg-[#262626] text-[#dedede]" : "bg-[#e5e5e5] text-[#404040]")
      }
    >
      <span className="whitespace-pre">
        Workout Tracker, <a className={linkTone(dark)}>branch master (c33cf475)</a>
      </span>
      <a className={"ml-[25.500px] flex " + linkTone(dark)}>
        <FaGithub className="mr-[5px] mt-[1.500px] h-[10.250px] w-[10.250px]" />
        GitHub
      </a>
      <a className={"ml-[26.500px] flex " + linkTone(dark)}>
        <CheckSquareIcon className="mr-[5px] mt-[1px] h-[9.500px] w-[9.500px]" />
        Changelog
      </a>
    </footer>
  );
}

function Page({ dark }: ThemeProps) {
  return (
    <div
      className={
        "flex h-[900px] w-[1200px] flex-col overflow-hidden px-[51px] font-['DejaVu_Sans',sans-serif] [grid-area:1/1] " +
        (dark ? "bg-[#171717] [clip-path:polygon(0_0,100%_0,100%_100%)]" : "bg-[#f5f5f5]")
      }
    >
      <Header dark={dark} />
      <main className={"mt-[4.500px] h-[825.500px] shrink-0 rounded-[8px] " + (dark ? "bg-[#404040]" : "bg-[#d4d4d4]")}>
        <TitleBar dark={dark} />
        <div className="flex flex-col gap-[9.600px] px-[31px]">
          <div className="flex items-start gap-[10px]">
            <MapCard dark={dark} />
            <DetailsCard dark={dark} />
            <SplitsCard dark={dark} />
          </div>
          <ChartCard dark={dark} />
        </div>
      </main>
      <Footer dark={dark} />
    </div>
  );
}

export default function App() {
  return (
    <div className="grid h-[900px] w-[1200px] overflow-hidden">
      <Page dark={false} />
      <Page dark />
    </div>
  );
}
